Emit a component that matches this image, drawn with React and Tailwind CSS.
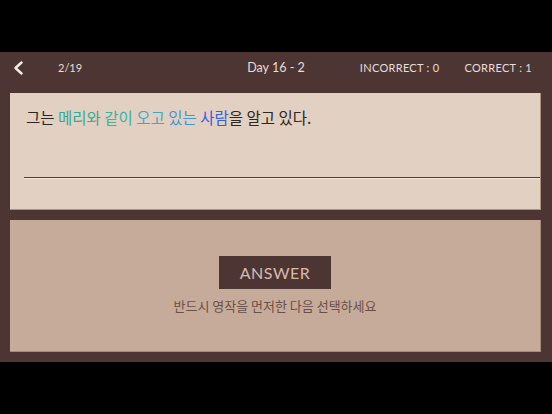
import React from "react";

export default function App() {
  const ko = { fontFamily: '"Noto Sans CJK KR", "Noto Sans", sans-serif' };
  const lat = { fontFamily: 'Lato, "Open Sans", sans-serif' };
  return (
    <div className="w-[552px] h-[414px] bg-black flex flex-col overflow-hidden">
      <div className="h-[52px] shrink-0" />
      <div className="bg-[#4d3534] flex flex-col pl-[10px] pr-[11px] pb-[10px]">
        <div className="h-[32px] flex items-center text-[#e9ddd6] relative -ml-[10px] -mr-[11px]" style={lat}>
          <svg className="ml-[13px]" width="11" height="14" viewBox="0 0 11 14">
            <path d="M8.5 1.5 L2.5 7 L8.5 12.5" fill="none" stroke="#f2ebe6" strokeWidth="2.4" strokeLinecap="round" strokeLinejoin="round" />
          </svg>
          <span className="ml-[34px] text-[11px]">2/19</span>
          <span className="absolute left-0 right-0 text-center text-[12.5px] pointer-events-none">Day 16 - 2</span>
          <span className="ml-auto text-[11px] tracking-[0.3px]">INCORRECT : 0</span>
          <span className="ml-[25px] mr-[20px] text-[11px] tracking-[0.3px]">CORRECT : 1</span>
        </div>
        <div className="mt-[9px] h-[117px] bg-[#e2d0c2] border-r border-b border-[#a8937f] flex flex-col">
          <div className="pl-[16px] pt-[12px] text-[15.5px] leading-[24px] text-[#2c2624]" style={ko}>
            그는 <span className="text-[#37a99a]">메리와</span> <span className="text-[#3db1a8]">같이</span>{" "}
            <span className="text-[#3fa9c6]">오고</span> <span className="text-[#4496d6]">있는</span>{" "}
            <span className="text-[#3b5ee0]">사람</span>을 알고 있다.
          </div>
          <div className="mt-[48px] ml-[14px] h-[1px] bg-[#4e403a]" />
          <div className="ml-[14px] h-[1px] bg-[#efe3da]" />
        </div>
        <div className="mt-[10px] h-[132px] bg-[#c6ab9b] border-r border-b border-[#a28c7c] flex flex-col items-center">
          <div className="mt-[36px] w-[112px] h-[33px] bg-[#4d3534] flex items-center justify-center text-[#d7bcac] text-[16px] tracking-[0.5px]" style={lat}>
            ANSWER
          </div>
          <div className="mt-[7px] text-[13px] text-[#6a5048]" style={ko}>
            반드시 영작을 먼저한 다음 선택하세요
          </div>
        </div>
      </div>
    </div>
  );
}
